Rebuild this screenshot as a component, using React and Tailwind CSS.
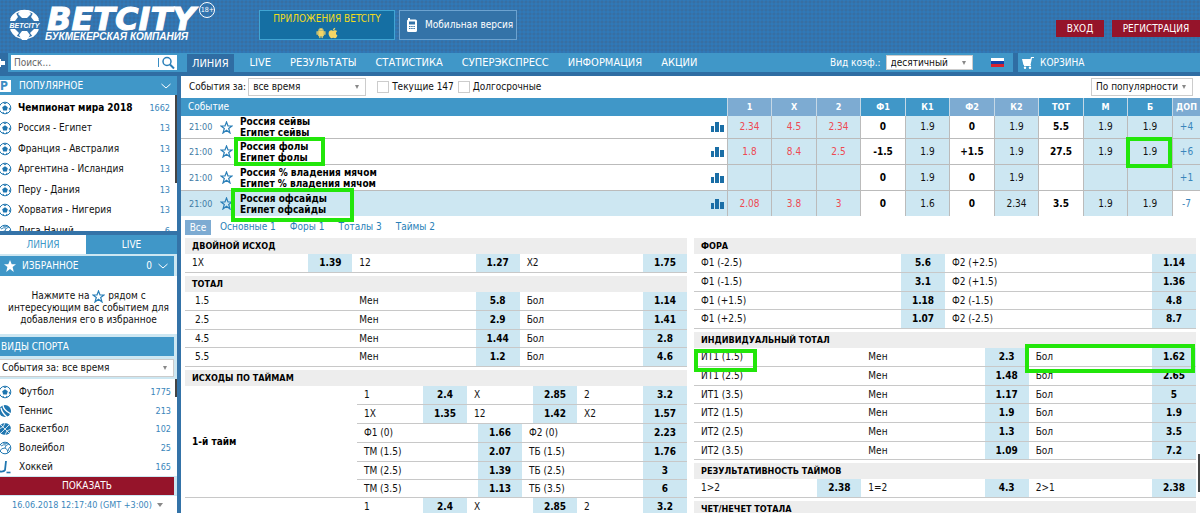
import React, { useState } from 'react';
import { FaApple } from 'react-icons/fa';
import { AiFillAndroid } from 'react-icons/ai';

const MENU = ['ЛИНИЯ', 'LIVE', 'РЕЗУЛЬТАТЫ', 'СТАТИСТИКА', 'СУПЕРЭКСПРЕСС', 'ИНФОРМАЦИЯ', 'АКЦИИ'];

const POPULAR = [
  { name: 'Чемпионат мира 2018', count: 1662, bold: true },
  { name: 'Россия - Египет', count: 13 },
  { name: 'Франция - Австралия', count: 13 },
  { name: 'Аргентина - Исландия', count: 13 },
  { name: 'Перу - Дания', count: 13 },
  { name: 'Хорватия - Нигерия', count: 13 },
  { name: 'Лига Наций', count: 6, icon: 'volleyball' },
];

const SPORTS = [
  { name: 'Футбол', count: 1775, icon: 'football' },
  { name: 'Теннис', count: 213, icon: 'tennis' },
  { name: 'Баскетбол', count: 102, icon: 'basketball' },
  { name: 'Волейбол', count: 25, icon: 'volleyball' },
  { name: 'Хоккей', count: 165, icon: 'hockey' },
];

const COLUMNS = [
  { label: '1', light: true },
  { label: 'X', light: true },
  { label: '2', light: true },
  { label: 'Ф1' },
  { label: 'К1' },
  { label: 'Ф2', light: true },
  { label: 'К2', light: true },
  { label: 'ТОТ' },
  { label: 'М' },
  { label: 'Б' },
];

const EVENTS = [
  { what: 'сейвы', odds: ['2.34', '4.5', '2.34', '0', '1.9', '0', '1.9', '5.5', '1.9', '1.9'], more: '+4', first: true },
  { what: 'фолы', odds: ['1.8', '8.4', '2.5', '-1.5', '1.9', '+1.5', '1.9', '27.5', '1.9', '1.9'], more: '+6', mark: '-left-[6px] -top-[4px] h-[29px] w-[91px]', markLast: true },
  { what: '% владения мячом', odds: ['', '', '', '0', '1.9', '0', '1.9', '', '', ''], more: '+1' },
  { what: 'офсайды', odds: ['2.08', '3.8', '3', '0', '1.6', '0', '2.34', '3.5', '1.9', '1.9'], more: '-7', mark: '-left-[9px] -top-[5px] h-[34px] w-[123px]', open: true },
];

const DOUBLE = [[['1X', '1.39'], ['12', '1.27'], ['X2', '1.75']]];

const TOTALS = [
  ['1.5', ['Мен', '5.8'], ['Бол', '1.14']],
  ['2.5', ['Мен', '2.9'], ['Бол', '1.41']],
  ['4.5', ['Мен', '1.44'], ['Бол', '2.8']],
  ['5.5', ['Мен', '1.2'], ['Бол', '4.6']],
];

const HALF_RESULT = [
  [['1', '2.4'], ['X', '2.85'], ['2', '3.2']],
  [['1X', '1.35'], ['12', '1.42'], ['X2', '1.57']],
];

const HALF_TOTALS = [
  [['Ф1 (0)', '1.66'], ['Ф2 (0)', '2.23']],
  [['ТМ (1.5)', '2.07'], ['ТБ (1.5)', '1.76']],
  [['ТМ (2.5)', '1.39'], ['ТБ (2.5)', '3']],
  [['ТМ (3.5)', '1.13'], ['ТБ (3.5)', '6']],
];

const HANDICAPS = [
  [['Ф1 (-2.5)', '5.6'], ['Ф2 (+2.5)', '1.14']],
  [['Ф1 (-1.5)', '3.1'], ['Ф2 (+1.5)', '1.36']],
  [['Ф1 (+1.5)', '1.18'], ['Ф2 (-1.5)', '4.8']],
  [['Ф1 (+2.5)', '1.07'], ['Ф2 (-2.5)', '8.7']],
];

const INDIVIDUAL = [
  ['ИТ1 (1.5)', ['Мен', '2.3'], ['Бол', '1.62']],
  ['ИТ1 (2.5)', ['Мен', '1.48'], ['Бол', '2.65']],
  ['ИТ1 (3.5)', ['Мен', '1.17'], ['Бол', '5']],
  ['ИТ2 (1.5)', ['Мен', '1.9'], ['Бол', '1.9']],
  ['ИТ2 (2.5)', ['Мен', '1.3'], ['Бол', '3.5']],
  ['ИТ2 (3.5)', ['Мен', '1.09'], ['Бол', '7.2']],
];

const HALVES_SCORE = [[['1>2', '2.38'], ['1=2', '4.3'], ['2>1', '2.38']]];

export default function App() {
  return (
    <div className="h-screen overflow-hidden flex flex-col bg-[#3473a8] font-['DejaVu_Sans_Condensed','Noto_Sans',sans-serif] text-[10px] leading-4 text-[#111]">
      <Header />
      <NavBar />
      <div className="flex flex-1 min-h-0 gap-1 border-t-4 border-[#2f6da3]">
        <Sidebar />
        <main className="flex-1 min-w-0 bg-white overflow-hidden relative">
          <Filters />
          <EventsTable />
          <Markets />
          <div className="absolute right-0 top-[378px] w-[2px] h-[38px] bg-[#444]" />
        </main>
      </div>
    </div>
  );
}

function Header() {
  return (
    <header className="h-[53px] shrink-0 flex items-start text-white bg-[#3079b8] bg-[radial-gradient(#376fa3_1px,transparent_2px)] bg-[size:4px_4px]">
      <a href="#" className="flex w-[259px] pl-2 pt-2 gap-1">
        <Globe />
        <span className="flex flex-col">
          <span className="pl-[2px] font-['DejaVu_Sans',sans-serif] font-bold italic text-[32px] leading-[23px] [-webkit-text-stroke:1px_white]">BETCITY</span>
          <span className="font-['Liberation_Sans',sans-serif] font-bold italic text-[10px] leading-3">БУКМЕКЕРСКАЯ КОМПАНИЯ</span>
        </span>
        <span className="-mt-[6px] size-4 shrink-0 rounded-full border border-white text-center text-[7px] leading-[14px]">18+</span>
      </a>
      <a href="#" className="mt-[10px] w-[136px] h-[30px] border border-[#41a5d3] bg-[#156fa3] flex flex-col items-center text-[#f3dc1c]">
        <span className="leading-4">ПРИЛОЖЕНИЯ BETCITY</span>
        <span className="flex text-[#f5d565]">
          <AiFillAndroid size={12} />
          <FaApple size={12} />
        </span>
      </a>
      <a href="#" className="mt-[10px] ml-1 w-[118px] h-[30px] border border-[#6da3d0] bg-[#3473a8] flex items-center gap-2 pl-[7px] whitespace-nowrap">
        <PhoneIcon />
        Мобильная версия
      </a>
      <div className="ml-auto mt-5 flex gap-2">
        <button className="h-[17px] w-12 bg-[#95142a]">ВХОД</button>
        <button className="h-[17px] w-[88px] bg-[#95142a]">РЕГИСТРАЦИЯ</button>
      </div>
    </header>
  );
}

function NavBar() {
  return (
    <div className="h-[19px] shrink-0 flex items-stretch bg-[#4097c8] text-white">
      <div className="w-[187px] flex items-center">
        <button aria-label="Назад" className="w-2 h-full mr-[3px] bg-[#2f6da3] flex items-center">
          <svg width="6" height="8" viewBox="0 0 6 8" fill="white"><path d="M0 0h1v2h4v4H1v2H0z" /></svg>
        </button>
        <label className="flex w-[166px] h-[15px] bg-white items-center">
          <input type="text" placeholder="Поиск..." aria-label="Поиск" className="flex-1 min-w-0 pl-[3px] outline-none text-[#222] placeholder:text-[#666]" />
          <span className="w-px h-[9px] bg-[#3a8dc3]" />
          <svg width="16" height="14" viewBox="0 0 16 14" fill="none" stroke="#2a7fb8" className="mx-[1px]">
            <circle cx="7" cy="5.500" r="4" strokeWidth="1.500" />
            <path d="M10 8.500l4 4" strokeWidth="2" />
          </svg>
        </label>
      </div>
      <nav className="flex text-[11px]">
        {MENU.map((item, i) => (
          <a key={item} href="#" className={i === 0 ? 'bg-[#2f6da3] px-[5px] mr-4 mt-px leading-[19px]' : 'mr-[19px] leading-5'}>{item}</a>
        ))}
      </nav>
      <div className="ml-auto w-[183px] flex items-center">
        <label htmlFor="odds-type" className="mr-[5px]">Вид коэф.:</label>
        <Select id="odds-type" className="w-[87px] h-[15px]" options={['десятичный']} />
        <svg width="13" height="9" viewBox="0 0 13 9" className="ml-auto mr-[9px]">
          <rect width="13" height="3" fill="#fff" />
          <rect y="3" width="13" height="3" fill="#1440a8" />
          <rect y="6" width="13" height="3" fill="#d8202c" />
        </svg>
      </div>
      <div className="w-[187px] pl-1 border-l-[5px] border-[#2f6da3] flex items-center gap-[6px]">
        <CartIcon />
        КОРЗИНА
      </div>
    </div>
  );
}

function Select({ id, options, className, ...rest }) {
  return (
    <span className={`relative inline-flex bg-white border border-[#ccc] text-[#111] ${className}`}>
      <select id={id} className="appearance-none w-full h-full pl-1 pr-3 outline-none leading-3" {...rest}>
        {options.map(o => <option key={o}>{o}</option>)}
      </select>
      <Caret className="absolute right-[6px] top-1/2 -translate-y-1/2" />
    </span>
  );
}

function Caret({ className }) {
  return (
    <svg width="4" height="4" viewBox="0 0 4 4" fill="#888" className={`pointer-events-none ${className}`}>
      <path d="M0 0h4L2 4z" />
    </svg>
  );
}

function Sidebar() {
  const [tab, setTab] = useState('line');

  return (
    <aside className="w-[177px] shrink-0 flex flex-col gap-1 overflow-hidden">
      <section>
        <h2 className="h-[19px] bg-[#4097c8] text-white flex items-center">
          <span className="w-[11px] h-3 mr-2 bg-white text-[#3a8dc3] text-[12px] leading-3 font-bold">P</span>
          ПОПУЛЯРНОЕ
          <Chevron className="ml-auto mr-[6px]" />
        </h2>
        <div className="relative h-[136px] overflow-hidden bg-white pt-[2px]">
          {POPULAR.map(p => (
            <a key={p.name} href="#" className="h-[20px] odd:h-[21px] flex items-center pr-[7px]">
              <SportIcon name={p.icon || 'football'} />
              <span className={p.bold ? 'ml-[6px] font-bold text-black' : 'ml-[6px]'}>{p.name}</span>
              <span className="ml-auto text-[9px] text-[#3a86bb]">{p.count}</span>
            </a>
          ))}
          <div className="absolute right-0 top-0 w-[2px] h-[88px] bg-[#444]" />
        </div>
      </section>

      <section className="flex-1 flex flex-col bg-[#cde7f2]">
        <div className="flex h-[19px]">
          <button onClick={() => setTab('line')} className={tab === 'line' ? 'w-[86px] bg-white text-[#4097c8]' : 'w-[86px] bg-[#4097c8] text-white'}>ЛИНИЯ</button>
          <button onClick={() => setTab('live')} className={tab === 'live' ? 'flex-1 bg-white text-[#4097c8]' : 'flex-1 bg-[#4097c8] text-white'}>LIVE</button>
        </div>
        <div className="mt-[2px] mr-[3px] h-[20px] shrink-0 bg-[#4097c8] text-white flex items-center">
          <svg width="12" height="12" viewBox="0 0 12 12" fill="white" className="ml-1 mr-[6px]">
            <path d="M6 0l1.700 4.200H12L8.600 7 9.800 12 6 9 2.200 12 3.400 7 0 4.200h4.300z" />
          </svg>
          ИЗБРАННОЕ
          <span className="ml-auto">0</span>
          <Chevron className="mx-[6px]" />
        </div>
        <p className="h-[58px] shrink-0 bg-white px-2 pt-[14px] leading-[12px] text-center">
          Нажмите на <StarOutline className="inline -my-1" /> рядом с интересующим вас событием для добавления его в избранное
        </p>
        <h2 className="mt-[3px] mr-[3px] h-[19px] bg-[#4097c8] pl-[1px] text-white leading-[19px]">ВИДЫ СПОРТА</h2>
        <Select className="mt-[3px] mr-[3px] h-[18px] -ml-[3px]" aria-label="События за" options={['События за: все время']} />
        <div className="relative mt-[2px] flex-1 bg-white pt-[3px]">
          {SPORTS.map(s => (
            <a key={s.name} href="#" className="h-[19px] nth-[3n]:h-[18px] flex items-center pr-[6px]">
              <SportIcon name={s.icon} />
              <span className="ml-[7px]">{s.name}</span>
              <span className="ml-auto text-[9px] text-[#3a86bb]">{s.count}</span>
            </a>
          ))}
          <div className="absolute right-0 top-0 w-[2px] h-[18px] bg-[#444]" />
        </div>
        <button className="my-[1px] mr-[3px] h-[18px] shrink-0 bg-[#95142a] text-white">ПОКАЗАТЬ</button>
        <button className="h-[17px] shrink-0 bg-white text-[9px] text-[#3a86bb] flex items-center pl-3 gap-[5px] whitespace-nowrap">
          16.06.2018 12:17:40 (GMT +3:00)
          <svg width="6" height="4" viewBox="0 0 6 4" fill="#888"><path d="M0 0h6L3 4z" /></svg>
        </button>
      </section>
    </aside>
  );
}

function Chevron({ className }) {
  return (
    <svg width="10" height="6" viewBox="0 0 10 6" fill="none" stroke="white" className={className}>
      <path d="M.5 1L5 5l4.500-4" />
    </svg>
  );
}

function Filters() {
  return (
    <div className="h-[22px] flex items-center pl-2 pr-[7px]">
      <label htmlFor="period" className="mr-[2px]">События за:</label>
      <Select id="period" className="w-[118px] h-[18px]" options={['все время']} />
      <label className="ml-[11px] flex items-center">
        <input type="checkbox" className="appearance-none size-3 mr-[3px] border border-[#ccc] bg-white" />
        Текущие 147
      </label>
      <label className="ml-1 flex items-center">
        <input type="checkbox" className="appearance-none size-3 mr-[3px] border border-[#ccc] bg-white" />
        Долгосрочные
      </label>
      <Select className="ml-auto w-[102px] h-[18px]" aria-label="Сортировка" options={['По популярности']} />
    </div>
  );
}

function EventsTable() {
  return (
    <table className="w-full table-fixed border-separate border-spacing-0 text-center">
      <thead>
        <tr className="h-[18px] text-white text-[9px]">
          <th className="bg-[#4097c8] text-left pl-[7px] text-[10px] font-normal">Событие</th>
          {COLUMNS.map(c => (
            <th key={c.label} className={`w-[45px] even:w-[44px] border-l border-[#c5d8e6] ${c.light ? 'bg-[#7dabd2]' : 'bg-[#4097c8]'}`}>{c.label}</th>
          ))}
          <th className="w-[28px] border-l border-[#c5d8e6] bg-[#7dabd2]">ДОП</th>
        </tr>
      </thead>
      <tbody>
        {EVENTS.map(e => <EventRow key={e.what} event={e} />)}
      </tbody>
    </table>
  );
}

function EventRow({ event }) {
  const { what, odds, more, mark, markLast, open, first } = event;
  // красные - исходы, жирные - форы и тотал
  const tone = (i) => {
    if (i < 3) return 'bg-[#cde7f2] text-[#ee4a52]';
    if (i === 3 || i === 5 || i === 7) return 'bg-white font-bold text-black';
    return 'bg-[#cde7f2]';
  };
  const line = open ? '' : 'border-b border-b-[#bbb]';

  return (
    <tr className={first ? 'h-[23px]' : 'h-[26px] last:h-[25px]'}>
      <td className={`${open ? 'bg-[#cde7f2]' : ''} ${line}`}>
        <div className="flex items-center pl-2 pr-[3px]">
          <span className="w-[31px] text-left text-[9px] text-[#3f7ca6]">21:00</span>
          <StarOutline />
          <div className="relative ml-[7px] text-left font-bold text-black leading-[11px]">
            <div>Россия {what}</div>
            <div>Египет {what}</div>
            {mark && <span className={`absolute z-10 border-4 border-[#22e60a] ${mark}`} />}
          </div>
          <BarsIcon className="ml-auto" />
        </div>
      </td>
      {odds.map((o, i) => (
        <td key={i} className={`relative border-l border-l-[#bbb] ${line} ${tone(i)}`}>
          {o}
          {markLast && i === 9 && <span className="absolute z-10 -left-[2px] -top-[2px] h-[31px] w-[46px] border-4 border-[#22e60a]" />}
        </td>
      ))}
      <td className={`border-l border-l-[#bbb] text-[#3a86bb] ${line} ${open ? 'bg-white' : 'bg-[#cde7f2]'}`}>{more}</td>
    </tr>
  );
}

function Markets() {
  return (
    <>
      <div className="h-[22px] flex items-center pl-1 gap-[14px] text-[#2a7fb8]">
        <button className="w-[26px] h-[15px] -mr-[5px] bg-[#7dabd2] text-white leading-[15px]">Все</button>
        <button>Основные 1</button>
        <button>Форы 1</button>
        <button>Тоталы 3</button>
        <button>Таймы 2</button>
      </div>
      <div className="grid grid-cols-2 gap-[7px] pl-1 pr-1">
        <div className="flex flex-col gap-[3px]">
          <Market title="ДВОЙНОЙ ИСХОД"><Odds rows={DOUBLE} /></Market>
          <Market title="ТОТАЛ"><Odds rows={TOTALS} indent /></Market>
          <Market title="ИСХОДЫ ПО ТАЙМАМ">
            <Half title="1-й тайм" />
            <Half title="2-й тайм" />
          </Market>
        </div>
        <div className="flex flex-col gap-[3px]">
          <Market title="ФОРА"><Odds rows={HANDICAPS} /></Market>
          <Market title="ИНДИВИДУАЛЬНЫЙ ТОТАЛ"><Odds rows={INDIVIDUAL} marked /></Market>
          <Market title="РЕЗУЛЬТАТИВНОСТЬ ТАЙМОВ"><Odds rows={HALVES_SCORE} /></Market>
          <Market title="ЧЕТ/НЕЧЕТ ТОТАЛА" />
        </div>
      </div>
    </>
  );
}

function Market({ title, children }) {
  return (
    <section>
      <h3 className="h-4 bg-[#ededed] pl-[7px] text-[9px] font-bold text-black leading-[17px]">{title}</h3>
      {children}
    </section>
  );
}

function Half({ title }) {
  return (
    <div className="flex border-b border-[#c8c8c8]">
      <div className="w-[172px] shrink-0 pl-[7px] flex items-center font-bold text-black">{title}</div>
      <div className="flex-1">
        <Odds rows={HALF_RESULT} />
        <Odds rows={HALF_TOTALS} nested />
      </div>
    </div>
  );
}

function Odds({ rows, indent, marked, nested }) {
  const line = 'border-b border-[#c8c8c8]';
  return (
    <table className={`w-full table-fixed border-separate border-spacing-0 ${nested ? '[&_tr:last-child]:h-[17px] [&_tr:last-child_td]:border-b-0' : ''}`}>
      <colgroup>
        {rows[0].map((_, i) => (
          <React.Fragment key={i}>
            <col />
            <col className="w-[44px]" />
          </React.Fragment>
        ))}
      </colgroup>
      <tbody>
        {rows.map((row, r) => (
          <tr key={r} className="h-[19px] nth-[3n]:h-[18px]">
            {row.map((cell, i) => {
              if (typeof cell === 'string') {
                return (
                  <td key={i} colSpan={2} className={`relative ${line} ${indent ? 'pl-[10px]' : 'pl-[7px]'}`}>
                    {cell}
                    {marked && r === 0 && <span className="absolute z-10 left-0 top-[1px] h-[23px] w-[63px] border-4 border-[#22e60a]" />}
                  </td>
                );
              }
              return (
                <React.Fragment key={i}>
                  <td className={`relative pl-[7px] ${line}`}>
                    {cell[0]}
                    {marked && r === 0 && i === 2 && <span className="absolute z-10 -left-[4px] -top-[4px] h-[29px] w-[170px] border-4 border-[#22e60a]" />}
                  </td>
                  <td className={`bg-[#cde7f2] text-center font-bold text-black ${line}`}>{cell[1]}</td>
                </React.Fragment>
              );
            })}
          </tr>
        ))}
      </tbody>
    </table>
  );
}

function Globe() {
  return (
    <svg width="33" height="33" viewBox="0 0 33 33" className="shrink-0">
      <path d="M3 11A15 15 0 0 1 30 11M3 22A15 15 0 0 0 30 22" fill="none" stroke="white" strokeWidth="1.500" />
      <path d="M13 2h7l3 4-4 4h-5l-4-4zM3 9l5-4 2 4-3 4H2zM30 9l-5-4-2 4 3 4h5zM2 21h5l4 4-3 4zM31 21h-5l-4 4 3 4zM14 23h5l3 4-3 5h-5l-3-5z" fill="white" />
      <text x="16.500" y="20" textAnchor="middle" fontSize="7" fontWeight="bold" fontStyle="italic" fontFamily="Liberation Sans" fill="white">BETCITY</text>
    </svg>
  );
}

function PhoneIcon() {
  return (
    <svg width="10" height="14" viewBox="0 0 10 14" fill="white" className="shrink-0">
      <path d="M1 0h2v1.500h5.500Q10 1.500 10 3v9.500Q10 14 8.500 14h-7Q0 14 0 12.500V2.500L1 1.500z" />
      <rect x="2" y="3.500" width="6" height="3" fill="#3473a8" />
      <path d="M2 8.500h6M2 10.500h6" stroke="#3473a8" strokeDasharray="1.500 0.700" />
    </svg>
  );
}

function CartIcon() {
  return (
    <svg width="12" height="12" viewBox="0 0 12 12" fill="white">
      <path d="M0 2h8.500l.5-2h3v1h-2L8.500 8H9v1H2V8h-.5z" />
      <circle cx="3" cy="10.800" r="1.200" />
      <circle cx="8" cy="10.800" r="1.200" />
    </svg>
  );
}

function BarsIcon({ className }) {
  return (
    <svg width="13" height="10" viewBox="0 0 13 10" fill="#1a6ea6" className={className}>
      <path d="M0 4h3v6H0zM4 0h4v10H4zM9 3h4v7H9z" />
    </svg>
  );
}

function StarOutline({ className }) {
  return (
    <svg width="13" height="13" viewBox="0 0 13 13" fill="none" stroke="#2a7fb8" strokeWidth="1.200" className={className}>
      <path d="M6.500 1l1.500 4h4L8.700 7.500 10 12 6.500 9.300 3 12l1.300-4.500L1 5h4z" />
    </svg>
  );
}

function SportIcon({ name }) {
  const blue = '#1f76b0';
  return (
    <svg width="12" height="14" viewBox="2 0 12 14" fill="none" stroke={blue} className="shrink-0">
      {name === 'football' && (
        <>
          <circle cx="7" cy="7" r="5.800" />
          <path d="M7 4.200l2.800 2-1 3.200H5.200l-1-3.200zM5 1.800l4 0-2 1.400zM12.300 6l-.3 3-1.500-1zM4 11.500l1.500-.7.5 1.500zM10 11.500l-1.500-.7-.5 1.500z" fill={blue} stroke="none" />
        </>
      )}
      {name === 'tennis' && (
        <>
          <circle cx="7" cy="7" r="6" fill={blue} stroke="none" />
          <path d="M5 1q0 5 8 9M3 4q1 5 6 9" stroke="white" strokeWidth="1.300" />
        </>
      )}
      {name === 'basketball' && (
        <>
          <circle cx="7" cy="7" r="6" fill={blue} stroke="none" />
          <path d="M3 11l8-8M3 3l8 8M7 1q-1 5-6 6M13 7q-5 1-6 6" stroke="white" strokeWidth=".8" />
        </>
      )}
      {name === 'volleyball' && (
        <>
          <circle cx="7" cy="7" r="5.800" />
          <path d="M7 7q0-3 4-4M7 7q3 1 3 5M7 7q-4 0-5 3M5 2q3 1 5 0M12 6q-2 2-2 4M3 5q3-2 5-1" strokeWidth=".9" />
        </>
      )}
      {name === 'hockey' && (
        <>
          <path d="M8 1L7 10q-1 2-5 1.500" strokeWidth="1.800" />
          <path d="M8.500 12.500h4" strokeWidth="1.600" />
        </>
      )}
    </svg>
  );
}
